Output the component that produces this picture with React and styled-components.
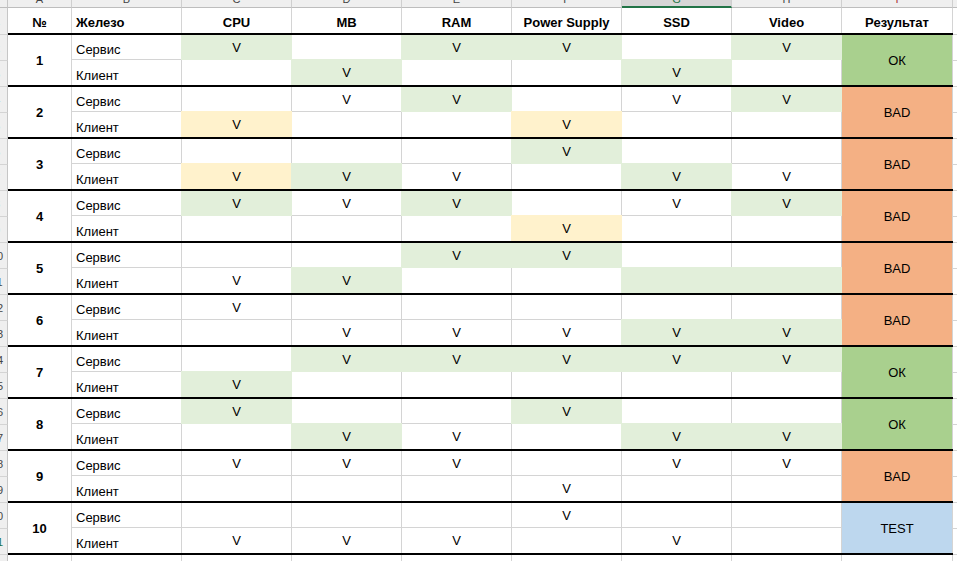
import React from 'react';
import styled, { createGlobalStyle } from 'styled-components';

const GRID = '#d4d4d4';
const FILLS = { G: '#e2efda', g: '#e2efda', Y: '#fff2cc', y: '#fff2cc' };
const RESULT_FILLS = { 'ОК': '#a9d08e', BAD: '#f4b084', TEST: '#bdd7ee' };

const Global = createGlobalStyle`
  html, body { margin: 0; padding: 0; background: #fff; overflow: hidden; }
  body { font-family: "Liberation Sans", Arial, sans-serif; }
`;

const Sheet = styled.div`
  width: 1013px;
  display: flex;
  flex-direction: column;
  font-family: "Liberation Sans", Arial, sans-serif;
  font-size: 13px;
  color: #000;
`;

const ColStrip = styled.div`
  display: flex;
  height: 8px;
  flex: none;
`;

const Corner = styled.div`
  flex: none;
  width: 8px;
  height: 8px;
  box-sizing: border-box;
  background: #efefef;
  border-right: 1px solid #c6c6c6;
  border-bottom: 1px solid #bdbdbd;
`;

const ColHead = styled.div`
  flex: none;
  width: ${(p) => p.$w}px;
  height: 8px;
  box-sizing: border-box;
  background: ${(p) => (p.$sel ? '#d6d6d6' : '#efefef')};
  border-right: 1px solid #cfcfcf;
  border-bottom: ${(p) => (p.$sel ? '2px solid #217346' : '1px solid #bdbdbd')};
  padding-bottom: ${(p) => (p.$sel ? 1 : 2)}px;
  display: flex;
  align-items: flex-end;
  justify-content: center;
  overflow: hidden;
  font-size: 11px;
  line-height: 11px;
  color: ${(p) => (p.$sel ? '#217346' : p.$tone || '#444')};
`;

const Letter = styled.span`
  flex: none;
`;

const Row = styled.div`
  display: flex;
  flex: none;
`;

const RowHeads = styled.div`
  flex: none;
  width: 8px;
  display: flex;
  flex-direction: column;
`;

const RowHead = styled.div`
  flex: none;
  height: ${(p) => p.$h}px;
  box-sizing: border-box;
  background: #efefef;
  border-right: 1px solid #c6c6c6;
  border-bottom: 1px solid #d4d4d4;
  display: flex;
  justify-content: flex-end;
  align-items: center;
  overflow: hidden;
  white-space: nowrap;
  font-size: 11px;
  color: ${(p) => (p.$sel ? '#217346' : '#444')};
`;

/* the row-number column is wider than the visible strip: only its right edge shows */
const Num = styled.span`
  flex: none;
  width: 20px;
  text-align: center;
`;

const HeaderBody = styled.div`
  flex: none;
  display: flex;
  height: 27px;
  box-sizing: border-box;
  border-bottom: 2px solid #000;
`;

const HeadCell = styled.div`
  flex: none;
  width: ${(p) => p.$w}px;
  box-sizing: border-box;
  border-right: 1px solid ${GRID};
  display: flex;
  align-items: flex-end;
  justify-content: ${(p) => (p.$left ? 'flex-start' : 'center')};
  padding: 0 4px 3px;
  font-weight: bold;
  line-height: 15px;
  white-space: nowrap;
`;

const GroupBody = styled.div`
  flex: none;
  display: flex;
  height: 52px;
  box-sizing: border-box;
  border-bottom: 2px solid #000;
`;

const NumCell = styled.div`
  flex: none;
  width: 64px;
  box-sizing: border-box;
  border-right: 1px solid ${GRID};
  display: flex;
  align-items: center;
  justify-content: center;
  font-weight: bold;
`;

const Pairs = styled.div`
  flex: none;
  display: flex;
  flex-direction: column;
`;

const SubRow = styled.div`
  display: flex;
  height: 25px;
`;

const LabelCell = styled.div`
  flex: none;
  width: 110px;
  box-sizing: border-box;
  border-right: 1px solid ${GRID};
  border-bottom: ${(p) => (p.$first ? `1px solid ${GRID}` : 'none')};
  display: flex;
  align-items: flex-end;
  padding: 0 4px 2px;
  line-height: 15px;
`;

const MarkCell = styled.div`
  flex: none;
  width: 110px;
  box-sizing: border-box;
  display: flex;
  align-items: center;
  justify-content: center;
  background: ${(p) => p.$fill || 'transparent'};
  border-right: 1px solid ${(p) => p.$fill || GRID};
  border-bottom: ${(p) => (p.$first ? `1px solid ${p.$fill || GRID}` : 'none')};
  box-shadow: ${(p) =>
    p.$fill
      ? p.$first
        ? `-1px 0 0 ${p.$fill}`
        : `-1px 0 0 ${p.$fill}, 0 -1px 0 ${p.$fill}, -1px -1px 0 ${p.$fill}`
      : 'none'};
`;

const ResultCell = styled.div`
  flex: none;
  width: 111px;
  box-sizing: border-box;
  border-right: 1px solid ${GRID};
  background: ${(p) => p.$fill};
  display: flex;
  align-items: center;
  justify-content: center;
`;

const Filler = styled.div`
  flex: none;
  width: 60px;
  display: flex;
  flex-direction: column;
`;

const FillerCell = styled.div`
  flex: none;
  height: ${(p) => p.$h}px;
  box-sizing: border-box;
  border-right: 1px solid ${GRID};
  border-bottom: 1px solid ${GRID};
`;

const PlainCell = styled.div`
  flex: none;
  width: ${(p) => p.$w}px;
  height: 26px;
  box-sizing: border-box;
  border-right: 1px solid ${GRID};
  border-bottom: 1px solid ${GRID};
`;

const WIDTHS = [64, 110, 110, 110, 110, 110, 110, 110, 111];
const LETTERS = ['A', 'B', 'C', 'D', 'E', 'F', 'G', 'H', 'I'];
const HEADERS = ['CPU', 'MB', 'RAM', 'Power Supply', 'SSD', 'Video'];

const GROUPS = [
  { s: 'G.GG.G', k: '.G..G.', r: 'ОК' },
  { s: '.vG.vG', k: 'Y..Y..', r: 'BAD' },
  { s: '...G..', k: 'YGv.Gv', r: 'BAD' },
  { s: 'GvG.vG', k: '...Y..', r: 'BAD' },
  { s: '..GG..', k: 'vG..gg', r: 'BAD' },
  { s: 'v.....', k: '.vvvGG', r: 'BAD' },
  { s: '.GGGGG', k: 'G.....', r: 'ОК' },
  { s: 'G..G..', k: '.Gv.GG', r: 'ОК' },
  { s: 'vvv.vv', k: '...v..', r: 'BAD' },
  { s: '...v..', k: 'vvv.v.', r: 'TEST' },
];

const Marks = ({ code, first }) =>
  code.split('').map((c, i) => (
    <MarkCell key={i} $first={first} $fill={FILLS[c]}>
      {c === '.' || c === 'g' || c === 'y' ? '' : 'V'}
    </MarkCell>
  ));

export default function App() {
  return (
    <>
      <Global />
      <Sheet>
        <ColStrip>
          <Corner />
          {LETTERS.map((l, i) => (
            <ColHead key={l} $w={WIDTHS[i]} $sel={l === 'G'} $tone={l === 'I' ? '#a33' : undefined}>
              <Letter>{l}</Letter>
            </ColHead>
          ))}
          <ColHead $w={60}>
            <Letter>J</Letter>
          </ColHead>
        </ColStrip>

        <Row>
          <RowHeads>
            <RowHead $h={27}>
              <Num>1</Num>
            </RowHead>
          </RowHeads>
          <HeaderBody>
            <HeadCell $w={64}>№</HeadCell>
            <HeadCell $w={110} $left>
              Железо
            </HeadCell>
            {HEADERS.map((h) => (
              <HeadCell key={h} $w={110}>
                {h}
              </HeadCell>
            ))}
            <HeadCell $w={111}>Результат</HeadCell>
          </HeaderBody>
          <Filler>
            <FillerCell $h={27} />
          </Filler>
        </Row>

        {GROUPS.map((g, idx) => {
          const n = idx + 1;
          return (
            <Row key={n}>
              <RowHeads>
                <RowHead $h={26}>
                  <Num>{2 * n}</Num>
                </RowHead>
                <RowHead $h={26} $sel={n === 10}>
                  <Num>{2 * n + 1}</Num>
                </RowHead>
              </RowHeads>
              <GroupBody>
                <NumCell>{n}</NumCell>
                <Pairs>
                  <SubRow>
                    <LabelCell $first>Сервис</LabelCell>
                    <Marks code={g.s} first />
                  </SubRow>
                  <SubRow>
                    <LabelCell>Клиент</LabelCell>
                    <Marks code={g.k} />
                  </SubRow>
                </Pairs>
                <ResultCell $fill={RESULT_FILLS[g.r]}>{g.r}</ResultCell>
              </GroupBody>
              <Filler>
                <FillerCell $h={26} />
                <FillerCell $h={26} />
              </Filler>
            </Row>
          );
        })}

        <Row>
          <RowHeads>
            <RowHead $h={26}>
              <Num>22</Num>
            </RowHead>
          </RowHeads>
          {WIDTHS.map((w, i) => (
            <PlainCell key={i} $w={w} />
          ))}
          <PlainCell $w={60} />
        </Row>
      </Sheet>
    </>
  );
}
